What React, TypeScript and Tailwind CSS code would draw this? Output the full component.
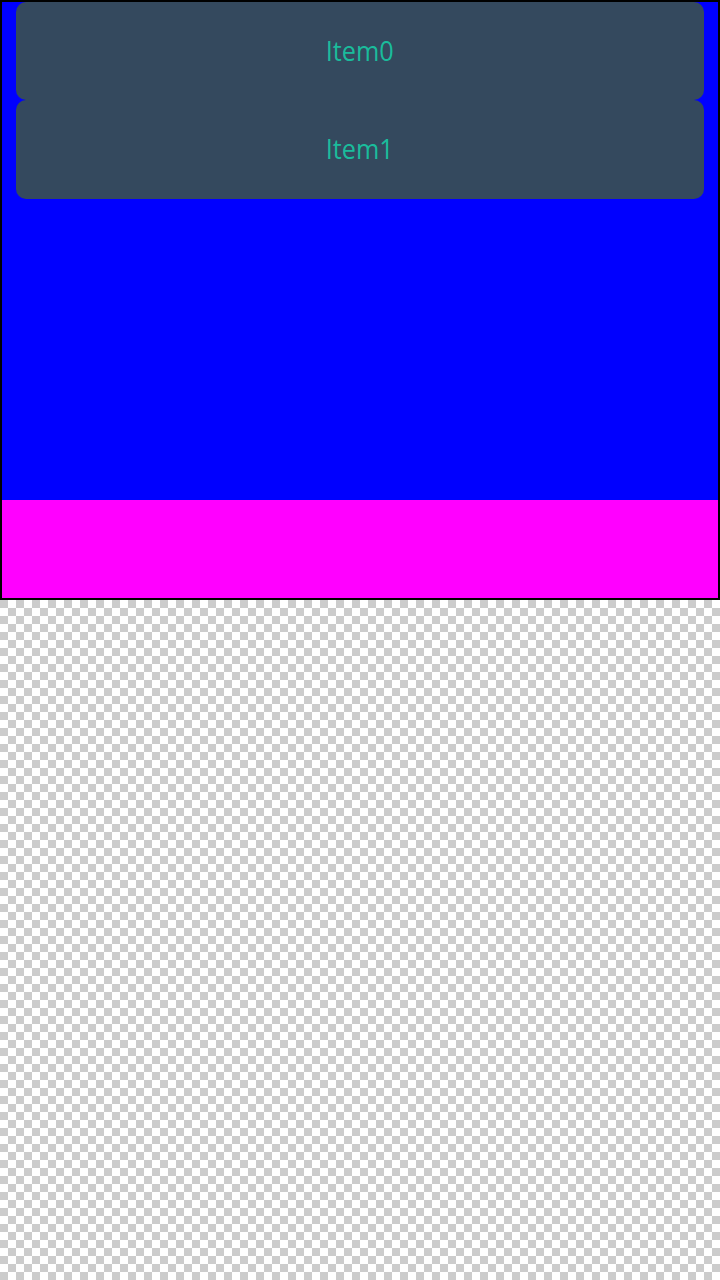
import React from "react";

function Item({ label, h }: { label: string; h: string }) {
  return (
    <div
      className={`${h} rounded-[10px] bg-[#34495e] flex items-center justify-center pb-[3px] text-[28px] leading-none text-[#1abc9c]`}
    >
      <span className="scale-x-90">{label}</span>
    </div>
  );
}

export default function App() {
  return (
    <div
      className="w-[720px] h-[1280px] bg-white"
      style={{
        backgroundImage:
          "linear-gradient(45deg, #cccccc 25%, transparent 25%, transparent 75%, #cccccc 75%), linear-gradient(45deg, #cccccc 25%, transparent 25%, transparent 75%, #cccccc 75%)",
        backgroundSize: "16px 16px",
        backgroundPosition: "0 0, 8px 8px",
      }}
    >
      <div className="w-[720px] h-[600px] border-2 border-black bg-[#0000ff] flex flex-col font-['Open_Sans',sans-serif]">
        <div className="flex-1 flex flex-col px-[14px]">
          <Item label="Item0" h="h-[98px]" />
          <Item label="Item1" h="h-[99px]" />
        </div>
        <div className="h-[98px] bg-[#ff00ff]" />
      </div>
    </div>
  );
}
